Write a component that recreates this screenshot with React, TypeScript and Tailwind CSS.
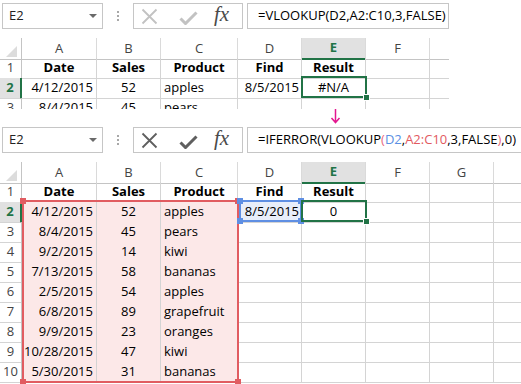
import React from "react"

const GRID_TOP = "grid grid-cols-[22px_75px_64px_77px_64px_64px_64px_1fr]"
const GRID_BOTTOM = "grid grid-cols-[22px_75px_64px_77px_64px_64px_64px_64px_1fr]"

// alignment per data column A..E (Excel: dates right, numbers centered here, text left)
const ALIGN = [
  "justify-end pr-[3px]",
  "justify-center",
  "justify-start pl-[3px]",
  "justify-end pr-[2px]",
  "justify-center",
]

function FormulaBar({ editing, children }: { editing?: boolean; children: React.ReactNode }) {
  const icon = editing ? "#5f5f5f" : "#c2c2c2"
  return (
    <div className="flex h-[26px] items-stretch">
      <div className="ml-[2px] flex w-[101px] shrink-0 items-center justify-between border border-[#c6c6c6] bg-white pl-[6px] pr-[5px] text-[13px] text-[#222]">
        <span>E2</span>
        <svg width="8" height="4" viewBox="0 0 8 4">
          <path d="M0 0h8L4 4z" fill="#6a6a6a" />
        </svg>
      </div>
      <div className="flex w-[30px] shrink-0 flex-col items-center justify-center gap-[2px]">
        <div className="h-[2px] w-[2px] bg-[#a8a8a8]" />
        <div className="h-[2px] w-[2px] bg-[#a8a8a8]" />
        <div className="h-[2px] w-[2px] bg-[#a8a8a8]" />
      </div>
      <div className="flex w-[110px] shrink-0 items-center border border-[#c6c6c6] bg-white pl-[7px]">
        <svg width="17" height="17" viewBox="0 0 17 17">
          <path d="M1.5 1.5l14 14M15.5 1.5l-14 14" stroke={icon} strokeWidth="1.8" fill="none" />
        </svg>
        <svg className="ml-[21px] mt-[4px]" width="19" height="14" viewBox="0 0 19 14">
          <path d="M1.5 7.5l5 5L17.5 1.5" stroke={icon} strokeWidth="3" fill="none" />
        </svg>
        <span className="ml-[16px] mb-[3px] font-['Liberation_Serif',serif] text-[21px] italic leading-none text-[#4a4a4a]">
          fx
        </span>
      </div>
      <div
        className={`ml-[4px] flex items-center whitespace-nowrap border border-[#c6c6c6] bg-white pl-[10px] text-[13px] text-black ${
          editing ? "w-[300px] shrink-0" : "flex-1"
        }`}
      >
        {children}
      </div>
    </div>
  )
}

function ColHeader({ grid, letters }: { grid: string; letters: string[] }) {
  return (
    <div className={`${grid} h-[20px]`}>
      <div className="flex items-end justify-end border-b border-r border-[#c4c4c4] pb-[2px] pr-[4px]">
        <svg width="11" height="11" viewBox="0 0 11 11">
          <path d="M11 0v11H0z" fill="#dcdcdc" />
        </svg>
      </div>
      {letters.map((l, i) => {
        const last = i === letters.length - 1
        const active = l === "E"
        return (
          <div
            key={i}
            className={`flex items-center justify-center text-[13px] ${last ? "" : "border-r border-r-[#dadada]"} ${
              active
                ? "border-b-2 border-b-[#217346] bg-[#e1e1e1] font-bold text-[#217346]"
                : "border-b border-b-[#c4c4c4] text-[#444]"
            }`}
          >
            {l}
          </div>
        )
      })}
    </div>
  )
}

function SheetRow({
  grid,
  n,
  cells,
  total,
  bold,
  tint,
}: {
  grid: string
  n: number
  cells: string[]
  total: number
  bold?: boolean
  tint?: (col: number) => string
}) {
  const active = n === 2
  return (
    <div className={`${grid} h-[20px]`}>
      <div
        className={`flex items-center justify-center border-b border-b-[#d4d4d4] text-[13px] ${
          active
            ? "border-r-2 border-r-[#217346] bg-[#e1e1e1] font-bold text-[#217346]"
            : "border-r border-r-[#c4c4c4] text-[#444]"
        }`}
      >
        {n}
      </div>
      {Array.from({ length: total }).map((_, i) => {
        const last = i === total - 1
        const text = cells[i] ?? ""
        return (
          <div
            key={i}
            className={`flex items-center border-b border-b-[#d4d4d4] text-[13px] text-black ${
              last ? "" : "border-r border-r-[#d4d4d4]"
            } ${bold ? "justify-center font-bold" : ALIGN[i] ?? ""} ${tint ? tint(i) : ""}`}
          >
            {text}
          </div>
        )
      })}
    </div>
  )
}

// outline drawn over the cells of a referenced range, with its corner squares
function RangeBox({ className, color, corners }: { className: string; color: string; corners?: boolean }) {
  return (
    <div className={`absolute border-2 ${className}`}>
      {corners && (
        <>
          <div className={`absolute -left-[4px] -top-[4px] h-[6px] w-[6px] ${color}`} />
          <div className={`absolute -right-[4px] -top-[4px] h-[6px] w-[6px] ${color}`} />
          <div className={`absolute -bottom-[4px] -left-[4px] h-[6px] w-[6px] ${color}`} />
          <div className={`absolute -bottom-[4px] -right-[4px] h-[6px] w-[6px] ${color}`} />
        </>
      )}
      {!corners && (
        <div className={`absolute -bottom-[5px] -right-[5px] h-[7px] w-[7px] border border-white ${color}`} />
      )}
    </div>
  )
}

const HEADER = ["Date", "Sales", "Product", "Find", "Result"]

const DATA = [
  ["4/12/2015", "52", "apples", "8/5/2015", "0"],
  ["8/4/2015", "45", "pears"],
  ["9/2/2015", "14", "kiwi"],
  ["7/13/2015", "58", "bananas"],
  ["2/5/2015", "54", "apples"],
  ["6/8/2015", "89", "grapefruit"],
  ["9/9/2015", "23", "oranges"],
  ["10/28/2015", "47", "kiwi"],
  ["5/30/2015", "31", "bananas"],
]

export default function App() {
  return (
    <div className="h-[384px] w-[521px] overflow-hidden bg-white font-['Open_Sans',sans-serif]">
      {/* first screenshot: plain VLOOKUP, cropped */}
      <div className="h-[109px] w-[449px] overflow-hidden pt-[3px]">
        <FormulaBar>=VLOOKUP(D2,A2:C10,3,FALSE)</FormulaBar>
        <div className="relative mt-[9px]">
          <ColHeader grid={GRID_TOP} letters={["A", "B", "C", "D", "E", "F", ""]} />
          <SheetRow grid={GRID_TOP} n={1} cells={HEADER} total={7} bold />
          <SheetRow grid={GRID_TOP} n={2} cells={["4/12/2015", "52", "apples", "8/5/2015", "#N/A"]} total={7} />
          <SheetRow grid={GRID_TOP} n={3} cells={["8/4/2015", "45", "pears"]} total={7} />
          <RangeBox className="left-[301px] top-[38px] h-[22px] w-[66px] border-[#217346]" color="bg-[#217346]" />
        </div>
      </div>

      {/* arrow */}
      <div className="h-[18px] pl-[330px]">
        <svg width="11" height="16" viewBox="0 0 11 16">
          <path d="M5.5 0v13M1.5 9l4 4.5 4-4.5" stroke="#e3178f" strokeWidth="1.5" fill="none" />
        </svg>
      </div>

      {/* second screenshot: IFERROR wrapper */}
      <div className="h-[257px] overflow-hidden">
        <FormulaBar editing>
          =IFERROR(VLOOKUP<span className="text-[#ea6b7f]">(</span>
          <span className="text-[#5b8fe3]">D2</span>,<span className="text-[#e25a5f]">A2:C10</span>,3,FALSE
          <span className="text-[#ea6b7f]">)</span>,0)
        </FormulaBar>
        <div className="relative mt-[9px]">
          <ColHeader grid={GRID_BOTTOM} letters={["A", "B", "C", "D", "E", "F", "G", ""]} />
          <SheetRow grid={GRID_BOTTOM} n={1} cells={HEADER} total={8} bold />
          {DATA.map((row, r) => (
            <SheetRow
              key={r}
              grid={GRID_BOTTOM}
              n={r + 2}
              cells={row}
              total={8}
              tint={(c) => (c < 3 ? "bg-[#fce8e8]" : c === 3 && r === 0 ? "bg-[#e8eefa]" : "")}
            />
          ))}
          <RangeBox className="left-[22px] top-[38px] h-[183px] w-[217px] border-[#e15c61]" color="bg-[#e15c61]" corners />
          <RangeBox className="left-[239px] top-[38px] h-[22px] w-[63px] border-[#5f8fe3]" color="bg-[#5f8fe3]" corners />
          <RangeBox className="left-[301px] top-[38px] h-[22px] w-[66px] border-[#217346]" color="bg-[#217346]" />
        </div>
      </div>
    </div>
  )
}
